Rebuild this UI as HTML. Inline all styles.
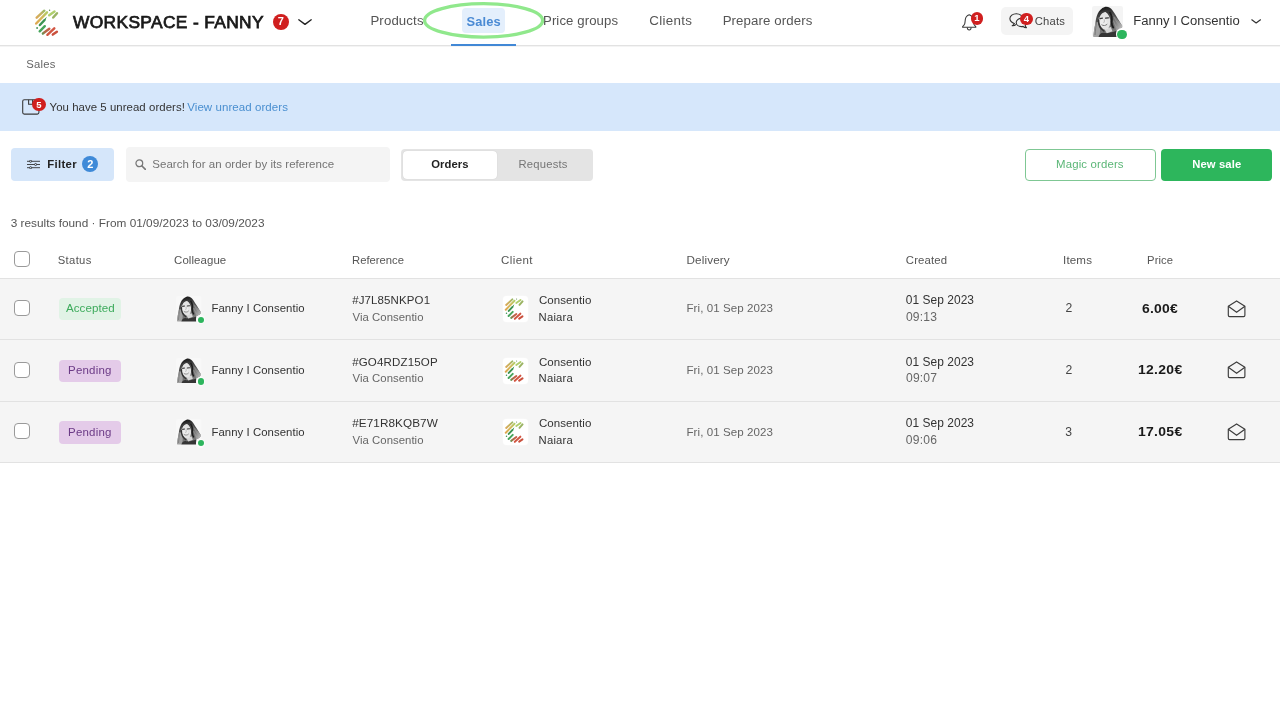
<!DOCTYPE html>
<html><head><meta charset="utf-8"><title>Sales</title>
<style>
html,body{margin:0;padding:0;background:#fff}
body{width:1280px;height:701px;position:relative;overflow:hidden;font-family:"Liberation Sans", sans-serif;}
.t{position:absolute;white-space:nowrap;line-height:20px;height:20px}
.b{position:absolute;box-sizing:border-box}
</style></head><body><div id="root" style="position:absolute;left:0;top:0;width:1280px;height:701px;will-change:transform">
<div class="b" style="left:0;top:44.5px;width:1280px;height:1.5px;background:#e2e2e2"></div>
<div class="b" style="left:0;top:46px;width:1280px;height:0.6px;background:#f4f4f4"></div>
<div class="b" style="left:461.7px;top:7.9px;width:43.6px;height:25px;border-radius:4px;background:#e4effc"></div>
<div class="b" style="left:451.1px;top:44.3px;width:65.1px;height:1.8px;background:#4188d6"></div>
<svg style="position:absolute;left:34px;top:9px" width="26.00" height="28.00" viewBox="0 0 26 28">
<defs>
<linearGradient id="lg34_9a" gradientUnits="userSpaceOnUse" x1="2" y1="10" x2="11" y2="1"><stop offset="0" stop-color="#dba14a"/><stop offset="0.55" stop-color="#c2ae55"/><stop offset="1" stop-color="#8fb45e"/></linearGradient>
<linearGradient id="lg34_9b" gradientUnits="userSpaceOnUse" x1="1.5" y1="15.5" x2="13.7" y2="2.7"><stop offset="0" stop-color="#dd9f42"/><stop offset="0.5" stop-color="#d3b24c"/><stop offset="1" stop-color="#a9cb5e"/></linearGradient>
<linearGradient id="lg34_9c" gradientUnits="userSpaceOnUse" x1="8.2" y1="25.2" x2="16" y2="19.2"><stop offset="0" stop-color="#4f9447"/><stop offset="0.35" stop-color="#a8603a"/><stop offset="1" stop-color="#c9503a"/></linearGradient>
</defs>
<g stroke-width="2.45" stroke-linecap="round" fill="none" opacity="0.93">
<line x1="2.7" y1="8.6" x2="10.3" y2="1.7" stroke="url(#lg34_9a)"/>
<line x1="2.2" y1="14.5" x2="13" y2="3.4" stroke="url(#lg34_9b)"/>
<line x1="15.2" y1="6.2" x2="20.5" y2="2.5" stroke="#a9cb62"/>
<line x1="19.2" y1="8.5" x2="23" y2="4.2" stroke="#93ae58"/>
<line x1="5.9" y1="16" x2="10.6" y2="11" stroke="#2f8c46"/>
<line x1="10.6" y1="11" x2="12.1" y2="8.8" stroke="#2f8c46" stroke-width="1"/>
<line x1="5.7" y1="22.3" x2="10.8" y2="17.2" stroke="#3a9f50"/>
<line x1="8.9" y1="24.6" x2="15.3" y2="19.8" stroke="url(#lg34_9c)"/>
<line x1="13.4" y1="25.8" x2="20.3" y2="19.4" stroke="#cf4a35"/>
<line x1="18.8" y1="25.6" x2="22.9" y2="22.8" stroke="#c6432f"/>
</g>
<circle cx="3.1" cy="19" r="0.9" fill="#3a9050"/><circle cx="15.6" cy="1.3" r="0.7" fill="#5d8a52"/>
</svg>
<div style="position:absolute;left:272.80px;top:14.10px;width:15.80px;height:15.80px;border-radius:50%;background:#d01f1f;color:#fff;font-weight:bold;font-size:11px;line-height:15.80px;text-align:center;">7</div>
<svg style="position:absolute;left:298px;top:19.3px" width="14" height="6.4" viewBox="0 0 14 6.4"><path d="M0.8 0.8 L7.0 5.4 L13.2 0.8" fill="none" stroke="#222" stroke-width="1.4" stroke-linecap="round" stroke-linejoin="round"/></svg>
<svg style="position:absolute;left:961.5px;top:13.5px" width="15" height="17.5" viewBox="0 0 15 17.5"><path d="M7.2 0.8 C5 1.5 3.6 3.2 3.3 5.6 C3.1 7.6 3 8.8 2.7 9.8 C2.3 11 1.4 11.8 0.6 12.6 L0.6 13.2 L13.8 13.2 L13.8 12.6 C13 11.8 12.1 11 11.7 9.8 C11.4 8.8 11.3 7.6 11.1 5.6 C10.8 3.2 9.4 1.5 7.2 0.8 Z" fill="none" stroke="#3a3a3a" stroke-width="1.05" stroke-linejoin="round"/><path d="M5.3 13.5 C5.4 16.7 9 16.7 9.1 13.5" fill="none" stroke="#3a3a3a" stroke-width="1.05"/></svg>
<div style="position:absolute;left:970.50px;top:12.20px;width:12.80px;height:12.80px;border-radius:50%;background:#d01f1f;color:#fff;font-weight:bold;font-size:9.5px;line-height:12.80px;text-align:center;">1</div>
<div class="b" style="left:1001.2px;top:7.4px;width:71.6px;height:27.2px;border-radius:5px;background:#f4f4f4"></div>
<svg style="position:absolute;left:1009px;top:13.2px" width="19" height="16" viewBox="0 0 19 16"><path d="M5.2 10.6 C2.4 9.4 0.9 7.6 0.9 5.6 C0.9 2.9 3.7 0.7 7.3 0.7 C10.9 0.7 13.6 2.9 13.6 5.6" fill="none" stroke="#333" stroke-width="1.1" stroke-linecap="round"/><path d="M5.2 10.6 C4.9 11.6 4.2 12.3 3.2 12.8 C4.8 12.9 6 12.5 6.9 11.6" fill="none" stroke="#333" stroke-width="1.1" stroke-linejoin="round" stroke-linecap="round"/><path d="M12.4 5.4 C9.5 5.4 7.2 7.2 7.2 9.5 C7.2 11.8 9.5 13.6 12.4 13.6 C13 13.6 13.6 13.5 14.1 13.4 C14.9 14.3 16.1 14.8 17.5 14.7 C16.7 14.1 16.3 13.3 16.2 12.4 C17.1 11.6 17.6 10.6 17.6 9.5 C17.6 7.2 15.3 5.4 12.4 5.4 Z" fill="none" stroke="#333" stroke-width="1.1" stroke-linejoin="round"/></svg>
<div style="position:absolute;left:1020.00px;top:12.60px;width:12.80px;height:12.80px;border-radius:50%;background:#d01f1f;color:#fff;font-weight:bold;font-size:9.5px;line-height:12.80px;text-align:center;">4</div>
<svg style="position:absolute;left:1091.8px;top:5.8px" width="31" height="31" viewBox="0 0 31 31">
<defs><clipPath id="av1091_5"><rect width="31" height="31" rx="2.2"/></clipPath>
<filter id="av1091_5b" x="-10%" y="-10%" width="120%" height="120%"><feGaussianBlur stdDeviation="0.55"/></filter>
<filter id="av1091_5c" x="-10%" y="-10%" width="120%" height="120%"><feGaussianBlur stdDeviation="0.45"/></filter>
<linearGradient id="av1091_5h" x1="0.35" y1="0" x2="0.6" y2="1"><stop offset="0" stop-color="#181818"/><stop offset="0.3" stop-color="#484848"/><stop offset="0.7" stop-color="#6e6e6e"/><stop offset="1" stop-color="#8a8a8a"/></linearGradient>
<linearGradient id="av1091_5r" x1="0" y1="0" x2="1" y2="0.8"><stop offset="0" stop-color="#505050"/><stop offset="0.55" stop-color="#828282"/><stop offset="1" stop-color="#bdbdbd"/></linearGradient>
</defs>
<g clip-path="url(#av1091_5)"><rect width="31" height="31" fill="#f4f4f4"/>
<g filter="url(#av1091_5b)">
<path d="M12.7 0.9 C16 0.2 18.8 1.8 20.8 4.8 C23 8 25.5 12 30.2 19.8 C30.6 21.6 28 23.4 24.6 24.6 L24.4 31.5 L1.4 31.5 C1.6 26.5 2.4 21.5 3.4 17.4 C3.8 11.5 6 3 12.7 0.9 Z" fill="url(#av1091_5h)"/>
<path d="M19.4 6.5 C22 9.5 25.6 13.2 30.2 19.8 C30.6 21.6 28 23.4 24.6 24.6 C22.6 21 20.6 15 19.4 6.5 Z" fill="url(#av1091_5r)"/>
<path d="M1.4 31.5 C1.6 26.5 2.4 21.5 3.4 17.4 C4.6 15.4 5.8 15.6 6.4 17.6 L8.2 24 L7.2 31.5 Z" fill="#a2a2a2"/>
<path d="M6.4 31.5 C7.2 27.6 9.4 26.2 12.6 26.8 C16 27.6 20 26.4 24.5 24.8 L24.4 31.5 Z" fill="#363636"/>
<path d="M12.4 23 L18.8 21 L20.4 25.2 L14.8 27.2 Z" fill="#d6d6d6"/>
<ellipse cx="12.5" cy="14.6" rx="5.7" ry="9.1" transform="rotate(-10 12.5 14.6)" fill="#e4e4e4"/>
<ellipse cx="11.4" cy="16.6" rx="3.4" ry="4.2" fill="#ececec"/>
</g>
<g filter="url(#av1091_5c)">
<path d="M6.8 9.6 C7.8 4.4 14.8 2.4 18.6 7.4 C16.6 6 14 5.6 11.8 6.4 C9.6 7.2 7.8 9.4 7 13 C6.6 11.8 6.6 10.6 6.8 9.6 Z" fill="#3a3a3a"/>
<path d="M18 6.4 C19.8 9 20.2 12.6 19.6 16.4 C19.8 18.6 20.4 20.4 21.2 21.6" stroke="#1c1c1c" stroke-width="1.8" fill="none" stroke-linecap="round"/>
<path d="M6.6 14 C6.4 18 8 22.4 11.8 25" stroke="#333" stroke-width="1.5" fill="none" stroke-linecap="round"/>
<path d="M8 12.6 L10.4 12.2 M13.6 12.2 L16.4 11.8" stroke="#3a3a3a" stroke-width="1.3" fill="none" stroke-linecap="round"/>
<path d="M12.2 13.4 C12.6 15 12.4 16 11.6 16.8" stroke="#a8a8a8" stroke-width="0.9" fill="none"/>
<path d="M9.8 18.9 C11.2 20 13.6 19.8 15 18.4" stroke="#787878" stroke-width="1" fill="none" stroke-linecap="round"/>
<path d="M22 11 C24 15 26 18 28.6 20.6 M21.4 14.6 C22.6 18 24 20.6 26 22.6" stroke="#a6a6a6" stroke-width="0.7" fill="none" opacity="0.8"/>
<path d="M4.6 16 C4 20 3.4 24 3 29" stroke="#6a6a6a" stroke-width="0.9" fill="none" opacity="0.8"/>
</g></g></svg>
<div style="position:absolute;left:1116.00px;top:28.40px;width:12.00px;height:12.00px;border-radius:50%;background:#fff"></div>
<div style="position:absolute;left:1117.40px;top:29.80px;width:9.20px;height:9.20px;border-radius:50%;background:#2db55d"></div>
<svg style="position:absolute;left:1250.6px;top:19.3px" width="10.3" height="5.0" viewBox="0 0 10.3 5.0"><path d="M0.8 0.8 L5.15 4.0 L9.5 0.8" fill="none" stroke="#333" stroke-width="1.2" stroke-linecap="round" stroke-linejoin="round"/></svg>
<div class="b" style="left:0;top:83px;width:1280px;height:47.5px;background:#d6e7fb"></div>
<svg style="position:absolute;left:21.6px;top:99px" width="18" height="16" viewBox="0 0 18 16"><rect x="0.7" y="0.7" width="16.2" height="14.4" rx="1.6" fill="none" stroke="#3a3a3a" stroke-width="1.1"/><path d="M6.6 0.7 L6.6 5.3 L10.6 5.3 L10.6 0.7" fill="none" stroke="#3a3a3a" stroke-width="1.1"/></svg>
<div style="position:absolute;left:32.40px;top:98.20px;width:13.20px;height:13.20px;border-radius:50%;background:#d01f1f;color:#fff;font-weight:bold;font-size:9.5px;line-height:13.20px;text-align:center;">5</div>
<div class="b" style="left:11px;top:148px;width:103.4px;height:32.8px;border-radius:4px;background:#d5e6fa"></div>
<svg style="position:absolute;left:26.9px;top:159.9px" width="13" height="9" viewBox="0 0 13 9"><g stroke="#333" stroke-width="0.9" fill="none"><path d="M0 1.3 H13 M0 4.5 H13 M0 7.7 H13"/></g><g fill="#d5e6fa" stroke="#333" stroke-width="0.9"><circle cx="3.6" cy="1.3" r="1.05"/><circle cx="8.6" cy="4.5" r="1.05"/><circle cx="3.6" cy="7.7" r="1.05"/></g></svg>
<div style="position:absolute;left:82.30px;top:156.40px;width:16.00px;height:16.00px;border-radius:50%;background:#3f8ad8;color:#fff;font-weight:bold;font-size:11px;line-height:16.00px;text-align:center;">2</div>
<div class="b" style="left:125.5px;top:147px;width:264px;height:35px;border-radius:4px;background:#f4f4f4"></div>
<svg style="position:absolute;left:134.8px;top:159.0px" width="11.3" height="11.3" viewBox="0 0 12 12"><circle cx="4.6" cy="4.6" r="3.6" fill="none" stroke="#777" stroke-width="1.3"/><path d="M7.4 7.4 L11 11" stroke="#777" stroke-width="1.7" stroke-linecap="round"/></svg>
<div class="b" style="left:400.5px;top:148.7px;width:192px;height:32.2px;border-radius:4px;background:#e4e4e4"></div>
<div class="b" style="left:403.2px;top:151px;width:93.4px;height:27.6px;border-radius:4px;background:#fff;box-shadow:0 0 1px rgba(0,0,0,.18)"></div>
<div class="b" style="left:1025px;top:149.2px;width:131px;height:31.6px;border-radius:4px;background:#fff;border:1px solid #7fc794"></div>
<div class="b" style="left:1161.2px;top:149.2px;width:110.8px;height:31.6px;border-radius:4px;background:#2db65c"></div>
<div class="b" style="left:0;top:278px;width:1280px;height:184px;background:#f5f5f5"></div>
<div class="b" style="left:0;top:278px;width:1280px;height:1px;background:#e2e2e2"></div>
<div class="b" style="left:0;top:339px;width:1280px;height:1px;background:#e2e2e2"></div>
<div class="b" style="left:0;top:400.8px;width:1280px;height:1px;background:#e2e2e2"></div>
<div class="b" style="left:0;top:461.6px;width:1280px;height:1px;background:#e2e2e2"></div>
<div style="position:absolute;left:14.1px;top:251.0px;width:16px;height:16px;box-sizing:border-box;border:1px solid #9a9a9a;border-radius:4px;background:#fff"></div>
<div style="position:absolute;left:14.1px;top:300.0px;width:16px;height:16px;box-sizing:border-box;border:1px solid #9a9a9a;border-radius:4px;background:#fff"></div>
<div class="b" style="left:59px;top:298.20000000000005px;width:62.2px;height:22.2px;border-radius:4px;background:#e1f3e6"></div>
<svg style="position:absolute;left:176.1px;top:296.1px" width="25.6" height="25.6" viewBox="0 0 31 31">
<defs><clipPath id="av176_296"><rect width="31" height="31" rx="2.2"/></clipPath>
<filter id="av176_296b" x="-10%" y="-10%" width="120%" height="120%"><feGaussianBlur stdDeviation="0.55"/></filter>
<filter id="av176_296c" x="-10%" y="-10%" width="120%" height="120%"><feGaussianBlur stdDeviation="0.45"/></filter>
<linearGradient id="av176_296h" x1="0.35" y1="0" x2="0.6" y2="1"><stop offset="0" stop-color="#181818"/><stop offset="0.3" stop-color="#484848"/><stop offset="0.7" stop-color="#6e6e6e"/><stop offset="1" stop-color="#8a8a8a"/></linearGradient>
<linearGradient id="av176_296r" x1="0" y1="0" x2="1" y2="0.8"><stop offset="0" stop-color="#505050"/><stop offset="0.55" stop-color="#828282"/><stop offset="1" stop-color="#bdbdbd"/></linearGradient>
</defs>
<g clip-path="url(#av176_296)"><rect width="31" height="31" fill="#f8f8f8"/>
<g filter="url(#av176_296b)">
<path d="M12.7 0.9 C16 0.2 18.8 1.8 20.8 4.8 C23 8 25.5 12 30.2 19.8 C30.6 21.6 28 23.4 24.6 24.6 L24.4 31.5 L1.4 31.5 C1.6 26.5 2.4 21.5 3.4 17.4 C3.8 11.5 6 3 12.7 0.9 Z" fill="url(#av176_296h)"/>
<path d="M19.4 6.5 C22 9.5 25.6 13.2 30.2 19.8 C30.6 21.6 28 23.4 24.6 24.6 C22.6 21 20.6 15 19.4 6.5 Z" fill="url(#av176_296r)"/>
<path d="M1.4 31.5 C1.6 26.5 2.4 21.5 3.4 17.4 C4.6 15.4 5.8 15.6 6.4 17.6 L8.2 24 L7.2 31.5 Z" fill="#a2a2a2"/>
<path d="M6.4 31.5 C7.2 27.6 9.4 26.2 12.6 26.8 C16 27.6 20 26.4 24.5 24.8 L24.4 31.5 Z" fill="#363636"/>
<path d="M12.4 23 L18.8 21 L20.4 25.2 L14.8 27.2 Z" fill="#d6d6d6"/>
<ellipse cx="12.5" cy="14.6" rx="5.7" ry="9.1" transform="rotate(-10 12.5 14.6)" fill="#e4e4e4"/>
<ellipse cx="11.4" cy="16.6" rx="3.4" ry="4.2" fill="#ececec"/>
</g>
<g filter="url(#av176_296c)">
<path d="M6.8 9.6 C7.8 4.4 14.8 2.4 18.6 7.4 C16.6 6 14 5.6 11.8 6.4 C9.6 7.2 7.8 9.4 7 13 C6.6 11.8 6.6 10.6 6.8 9.6 Z" fill="#3a3a3a"/>
<path d="M18 6.4 C19.8 9 20.2 12.6 19.6 16.4 C19.8 18.6 20.4 20.4 21.2 21.6" stroke="#1c1c1c" stroke-width="1.8" fill="none" stroke-linecap="round"/>
<path d="M6.6 14 C6.4 18 8 22.4 11.8 25" stroke="#333" stroke-width="1.5" fill="none" stroke-linecap="round"/>
<path d="M8 12.6 L10.4 12.2 M13.6 12.2 L16.4 11.8" stroke="#3a3a3a" stroke-width="1.3" fill="none" stroke-linecap="round"/>
<path d="M12.2 13.4 C12.6 15 12.4 16 11.6 16.8" stroke="#a8a8a8" stroke-width="0.9" fill="none"/>
<path d="M9.8 18.9 C11.2 20 13.6 19.8 15 18.4" stroke="#787878" stroke-width="1" fill="none" stroke-linecap="round"/>
<path d="M22 11 C24 15 26 18 28.6 20.6 M21.4 14.6 C22.6 18 24 20.6 26 22.6" stroke="#a6a6a6" stroke-width="0.7" fill="none" opacity="0.8"/>
<path d="M4.6 16 C4 20 3.4 24 3 29" stroke="#6a6a6a" stroke-width="0.9" fill="none" opacity="0.8"/>
</g></g></svg>
<div style="position:absolute;left:196.20px;top:315.30px;width:9.20px;height:9.20px;border-radius:50%;background:#fbfbfb"></div>
<div style="position:absolute;left:197.50px;top:316.60px;width:6.60px;height:6.60px;border-radius:50%;background:#2db55d"></div>
<div class="b" style="left:503.2px;top:296.1px;width:25.2px;height:26.2px;border-radius:4px;background:#fff;box-shadow:0 0 1.5px #fff"></div>
<svg style="position:absolute;left:504.0px;top:297.90000000000003px" width="20.99" height="22.61" viewBox="0 0 26 28">
<defs>
<linearGradient id="lg504_297a" gradientUnits="userSpaceOnUse" x1="2" y1="10" x2="11" y2="1"><stop offset="0" stop-color="#dba14a"/><stop offset="0.55" stop-color="#c2ae55"/><stop offset="1" stop-color="#8fb45e"/></linearGradient>
<linearGradient id="lg504_297b" gradientUnits="userSpaceOnUse" x1="1.5" y1="15.5" x2="13.7" y2="2.7"><stop offset="0" stop-color="#dd9f42"/><stop offset="0.5" stop-color="#d3b24c"/><stop offset="1" stop-color="#a9cb5e"/></linearGradient>
<linearGradient id="lg504_297c" gradientUnits="userSpaceOnUse" x1="8.2" y1="25.2" x2="16" y2="19.2"><stop offset="0" stop-color="#4f9447"/><stop offset="0.35" stop-color="#a8603a"/><stop offset="1" stop-color="#c9503a"/></linearGradient>
</defs>
<g stroke-width="2.45" stroke-linecap="round" fill="none" opacity="0.93">
<line x1="2.7" y1="8.6" x2="10.3" y2="1.7" stroke="url(#lg504_297a)"/>
<line x1="2.2" y1="14.5" x2="13" y2="3.4" stroke="url(#lg504_297b)"/>
<line x1="15.2" y1="6.2" x2="20.5" y2="2.5" stroke="#a9cb62"/>
<line x1="19.2" y1="8.5" x2="23" y2="4.2" stroke="#93ae58"/>
<line x1="5.9" y1="16" x2="10.6" y2="11" stroke="#2f8c46"/>
<line x1="10.6" y1="11" x2="12.1" y2="8.8" stroke="#2f8c46" stroke-width="1"/>
<line x1="5.7" y1="22.3" x2="10.8" y2="17.2" stroke="#3a9f50"/>
<line x1="8.9" y1="24.6" x2="15.3" y2="19.8" stroke="url(#lg504_297c)"/>
<line x1="13.4" y1="25.8" x2="20.3" y2="19.4" stroke="#cf4a35"/>
<line x1="18.8" y1="25.6" x2="22.9" y2="22.8" stroke="#c6432f"/>
</g>
<circle cx="3.1" cy="19" r="0.9" fill="#3a9050"/><circle cx="15.6" cy="1.3" r="0.7" fill="#5d8a52"/>
</svg>
<svg style="position:absolute;left:1226.6px;top:299.5px" width="19" height="18" viewBox="0 0 19 18"><path d="M1.3 6.3 L9.6 0.9 L17.9 6.3 L17.9 15.3 Q17.9 16.6 16.6 16.6 L2.6 16.6 Q1.3 16.6 1.3 15.3 Z" fill="none" stroke="#3c3c3c" stroke-width="1.15" stroke-linejoin="round"/><path d="M1.3 6.3 L9.6 12.3 L17.9 6.3" fill="none" stroke="#3c3c3c" stroke-width="1.15" stroke-linejoin="round"/></svg>
<div style="position:absolute;left:14.1px;top:361.59999999999997px;width:16px;height:16px;box-sizing:border-box;border:1px solid #9a9a9a;border-radius:4px;background:#fff"></div>
<div class="b" style="left:59px;top:359.8px;width:62.2px;height:22.2px;border-radius:4px;background:#e4cbe9"></div>
<svg style="position:absolute;left:176.1px;top:357.7px" width="25.6" height="25.6" viewBox="0 0 31 31">
<defs><clipPath id="av176_357"><rect width="31" height="31" rx="2.2"/></clipPath>
<filter id="av176_357b" x="-10%" y="-10%" width="120%" height="120%"><feGaussianBlur stdDeviation="0.55"/></filter>
<filter id="av176_357c" x="-10%" y="-10%" width="120%" height="120%"><feGaussianBlur stdDeviation="0.45"/></filter>
<linearGradient id="av176_357h" x1="0.35" y1="0" x2="0.6" y2="1"><stop offset="0" stop-color="#181818"/><stop offset="0.3" stop-color="#484848"/><stop offset="0.7" stop-color="#6e6e6e"/><stop offset="1" stop-color="#8a8a8a"/></linearGradient>
<linearGradient id="av176_357r" x1="0" y1="0" x2="1" y2="0.8"><stop offset="0" stop-color="#505050"/><stop offset="0.55" stop-color="#828282"/><stop offset="1" stop-color="#bdbdbd"/></linearGradient>
</defs>
<g clip-path="url(#av176_357)"><rect width="31" height="31" fill="#f8f8f8"/>
<g filter="url(#av176_357b)">
<path d="M12.7 0.9 C16 0.2 18.8 1.8 20.8 4.8 C23 8 25.5 12 30.2 19.8 C30.6 21.6 28 23.4 24.6 24.6 L24.4 31.5 L1.4 31.5 C1.6 26.5 2.4 21.5 3.4 17.4 C3.8 11.5 6 3 12.7 0.9 Z" fill="url(#av176_357h)"/>
<path d="M19.4 6.5 C22 9.5 25.6 13.2 30.2 19.8 C30.6 21.6 28 23.4 24.6 24.6 C22.6 21 20.6 15 19.4 6.5 Z" fill="url(#av176_357r)"/>
<path d="M1.4 31.5 C1.6 26.5 2.4 21.5 3.4 17.4 C4.6 15.4 5.8 15.6 6.4 17.6 L8.2 24 L7.2 31.5 Z" fill="#a2a2a2"/>
<path d="M6.4 31.5 C7.2 27.6 9.4 26.2 12.6 26.8 C16 27.6 20 26.4 24.5 24.8 L24.4 31.5 Z" fill="#363636"/>
<path d="M12.4 23 L18.8 21 L20.4 25.2 L14.8 27.2 Z" fill="#d6d6d6"/>
<ellipse cx="12.5" cy="14.6" rx="5.7" ry="9.1" transform="rotate(-10 12.5 14.6)" fill="#e4e4e4"/>
<ellipse cx="11.4" cy="16.6" rx="3.4" ry="4.2" fill="#ececec"/>
</g>
<g filter="url(#av176_357c)">
<path d="M6.8 9.6 C7.8 4.4 14.8 2.4 18.6 7.4 C16.6 6 14 5.6 11.8 6.4 C9.6 7.2 7.8 9.4 7 13 C6.6 11.8 6.6 10.6 6.8 9.6 Z" fill="#3a3a3a"/>
<path d="M18 6.4 C19.8 9 20.2 12.6 19.6 16.4 C19.8 18.6 20.4 20.4 21.2 21.6" stroke="#1c1c1c" stroke-width="1.8" fill="none" stroke-linecap="round"/>
<path d="M6.6 14 C6.4 18 8 22.4 11.8 25" stroke="#333" stroke-width="1.5" fill="none" stroke-linecap="round"/>
<path d="M8 12.6 L10.4 12.2 M13.6 12.2 L16.4 11.8" stroke="#3a3a3a" stroke-width="1.3" fill="none" stroke-linecap="round"/>
<path d="M12.2 13.4 C12.6 15 12.4 16 11.6 16.8" stroke="#a8a8a8" stroke-width="0.9" fill="none"/>
<path d="M9.8 18.9 C11.2 20 13.6 19.8 15 18.4" stroke="#787878" stroke-width="1" fill="none" stroke-linecap="round"/>
<path d="M22 11 C24 15 26 18 28.6 20.6 M21.4 14.6 C22.6 18 24 20.6 26 22.6" stroke="#a6a6a6" stroke-width="0.7" fill="none" opacity="0.8"/>
<path d="M4.6 16 C4 20 3.4 24 3 29" stroke="#6a6a6a" stroke-width="0.9" fill="none" opacity="0.8"/>
</g></g></svg>
<div style="position:absolute;left:196.20px;top:376.90px;width:9.20px;height:9.20px;border-radius:50%;background:#fbfbfb"></div>
<div style="position:absolute;left:197.50px;top:378.20px;width:6.60px;height:6.60px;border-radius:50%;background:#2db55d"></div>
<div class="b" style="left:503.2px;top:357.7px;width:25.2px;height:26.2px;border-radius:4px;background:#fff;box-shadow:0 0 1.5px #fff"></div>
<svg style="position:absolute;left:504.0px;top:359.5px" width="20.99" height="22.61" viewBox="0 0 26 28">
<defs>
<linearGradient id="lg504_359a" gradientUnits="userSpaceOnUse" x1="2" y1="10" x2="11" y2="1"><stop offset="0" stop-color="#dba14a"/><stop offset="0.55" stop-color="#c2ae55"/><stop offset="1" stop-color="#8fb45e"/></linearGradient>
<linearGradient id="lg504_359b" gradientUnits="userSpaceOnUse" x1="1.5" y1="15.5" x2="13.7" y2="2.7"><stop offset="0" stop-color="#dd9f42"/><stop offset="0.5" stop-color="#d3b24c"/><stop offset="1" stop-color="#a9cb5e"/></linearGradient>
<linearGradient id="lg504_359c" gradientUnits="userSpaceOnUse" x1="8.2" y1="25.2" x2="16" y2="19.2"><stop offset="0" stop-color="#4f9447"/><stop offset="0.35" stop-color="#a8603a"/><stop offset="1" stop-color="#c9503a"/></linearGradient>
</defs>
<g stroke-width="2.45" stroke-linecap="round" fill="none" opacity="0.93">
<line x1="2.7" y1="8.6" x2="10.3" y2="1.7" stroke="url(#lg504_359a)"/>
<line x1="2.2" y1="14.5" x2="13" y2="3.4" stroke="url(#lg504_359b)"/>
<line x1="15.2" y1="6.2" x2="20.5" y2="2.5" stroke="#a9cb62"/>
<line x1="19.2" y1="8.5" x2="23" y2="4.2" stroke="#93ae58"/>
<line x1="5.9" y1="16" x2="10.6" y2="11" stroke="#2f8c46"/>
<line x1="10.6" y1="11" x2="12.1" y2="8.8" stroke="#2f8c46" stroke-width="1"/>
<line x1="5.7" y1="22.3" x2="10.8" y2="17.2" stroke="#3a9f50"/>
<line x1="8.9" y1="24.6" x2="15.3" y2="19.8" stroke="url(#lg504_359c)"/>
<line x1="13.4" y1="25.8" x2="20.3" y2="19.4" stroke="#cf4a35"/>
<line x1="18.8" y1="25.6" x2="22.9" y2="22.8" stroke="#c6432f"/>
</g>
<circle cx="3.1" cy="19" r="0.9" fill="#3a9050"/><circle cx="15.6" cy="1.3" r="0.7" fill="#5d8a52"/>
</svg>
<svg style="position:absolute;left:1226.6px;top:361.09999999999997px" width="19" height="18" viewBox="0 0 19 18"><path d="M1.3 6.3 L9.6 0.9 L17.9 6.3 L17.9 15.3 Q17.9 16.6 16.6 16.6 L2.6 16.6 Q1.3 16.6 1.3 15.3 Z" fill="none" stroke="#3c3c3c" stroke-width="1.15" stroke-linejoin="round"/><path d="M1.3 6.3 L9.6 12.3 L17.9 6.3" fill="none" stroke="#3c3c3c" stroke-width="1.15" stroke-linejoin="round"/></svg>
<div style="position:absolute;left:14.1px;top:423.2px;width:16px;height:16px;box-sizing:border-box;border:1px solid #9a9a9a;border-radius:4px;background:#fff"></div>
<div class="b" style="left:59px;top:421.40000000000003px;width:62.2px;height:22.2px;border-radius:4px;background:#e4cbe9"></div>
<svg style="position:absolute;left:176.1px;top:419.3px" width="25.6" height="25.6" viewBox="0 0 31 31">
<defs><clipPath id="av176_419"><rect width="31" height="31" rx="2.2"/></clipPath>
<filter id="av176_419b" x="-10%" y="-10%" width="120%" height="120%"><feGaussianBlur stdDeviation="0.55"/></filter>
<filter id="av176_419c" x="-10%" y="-10%" width="120%" height="120%"><feGaussianBlur stdDeviation="0.45"/></filter>
<linearGradient id="av176_419h" x1="0.35" y1="0" x2="0.6" y2="1"><stop offset="0" stop-color="#181818"/><stop offset="0.3" stop-color="#484848"/><stop offset="0.7" stop-color="#6e6e6e"/><stop offset="1" stop-color="#8a8a8a"/></linearGradient>
<linearGradient id="av176_419r" x1="0" y1="0" x2="1" y2="0.8"><stop offset="0" stop-color="#505050"/><stop offset="0.55" stop-color="#828282"/><stop offset="1" stop-color="#bdbdbd"/></linearGradient>
</defs>
<g clip-path="url(#av176_419)"><rect width="31" height="31" fill="#f8f8f8"/>
<g filter="url(#av176_419b)">
<path d="M12.7 0.9 C16 0.2 18.8 1.8 20.8 4.8 C23 8 25.5 12 30.2 19.8 C30.6 21.6 28 23.4 24.6 24.6 L24.4 31.5 L1.4 31.5 C1.6 26.5 2.4 21.5 3.4 17.4 C3.8 11.5 6 3 12.7 0.9 Z" fill="url(#av176_419h)"/>
<path d="M19.4 6.5 C22 9.5 25.6 13.2 30.2 19.8 C30.6 21.6 28 23.4 24.6 24.6 C22.6 21 20.6 15 19.4 6.5 Z" fill="url(#av176_419r)"/>
<path d="M1.4 31.5 C1.6 26.5 2.4 21.5 3.4 17.4 C4.6 15.4 5.8 15.6 6.4 17.6 L8.2 24 L7.2 31.5 Z" fill="#a2a2a2"/>
<path d="M6.4 31.5 C7.2 27.6 9.4 26.2 12.6 26.8 C16 27.6 20 26.4 24.5 24.8 L24.4 31.5 Z" fill="#363636"/>
<path d="M12.4 23 L18.8 21 L20.4 25.2 L14.8 27.2 Z" fill="#d6d6d6"/>
<ellipse cx="12.5" cy="14.6" rx="5.7" ry="9.1" transform="rotate(-10 12.5 14.6)" fill="#e4e4e4"/>
<ellipse cx="11.4" cy="16.6" rx="3.4" ry="4.2" fill="#ececec"/>
</g>
<g filter="url(#av176_419c)">
<path d="M6.8 9.6 C7.8 4.4 14.8 2.4 18.6 7.4 C16.6 6 14 5.6 11.8 6.4 C9.6 7.2 7.8 9.4 7 13 C6.6 11.8 6.6 10.6 6.8 9.6 Z" fill="#3a3a3a"/>
<path d="M18 6.4 C19.8 9 20.2 12.6 19.6 16.4 C19.8 18.6 20.4 20.4 21.2 21.6" stroke="#1c1c1c" stroke-width="1.8" fill="none" stroke-linecap="round"/>
<path d="M6.6 14 C6.4 18 8 22.4 11.8 25" stroke="#333" stroke-width="1.5" fill="none" stroke-linecap="round"/>
<path d="M8 12.6 L10.4 12.2 M13.6 12.2 L16.4 11.8" stroke="#3a3a3a" stroke-width="1.3" fill="none" stroke-linecap="round"/>
<path d="M12.2 13.4 C12.6 15 12.4 16 11.6 16.8" stroke="#a8a8a8" stroke-width="0.9" fill="none"/>
<path d="M9.8 18.9 C11.2 20 13.6 19.8 15 18.4" stroke="#787878" stroke-width="1" fill="none" stroke-linecap="round"/>
<path d="M22 11 C24 15 26 18 28.6 20.6 M21.4 14.6 C22.6 18 24 20.6 26 22.6" stroke="#a6a6a6" stroke-width="0.7" fill="none" opacity="0.8"/>
<path d="M4.6 16 C4 20 3.4 24 3 29" stroke="#6a6a6a" stroke-width="0.9" fill="none" opacity="0.8"/>
</g></g></svg>
<div style="position:absolute;left:196.20px;top:438.50px;width:9.20px;height:9.20px;border-radius:50%;background:#fbfbfb"></div>
<div style="position:absolute;left:197.50px;top:439.80px;width:6.60px;height:6.60px;border-radius:50%;background:#2db55d"></div>
<div class="b" style="left:503.2px;top:419.3px;width:25.2px;height:26.2px;border-radius:4px;background:#fff;box-shadow:0 0 1.5px #fff"></div>
<svg style="position:absolute;left:504.0px;top:421.1px" width="20.99" height="22.61" viewBox="0 0 26 28">
<defs>
<linearGradient id="lg504_421a" gradientUnits="userSpaceOnUse" x1="2" y1="10" x2="11" y2="1"><stop offset="0" stop-color="#dba14a"/><stop offset="0.55" stop-color="#c2ae55"/><stop offset="1" stop-color="#8fb45e"/></linearGradient>
<linearGradient id="lg504_421b" gradientUnits="userSpaceOnUse" x1="1.5" y1="15.5" x2="13.7" y2="2.7"><stop offset="0" stop-color="#dd9f42"/><stop offset="0.5" stop-color="#d3b24c"/><stop offset="1" stop-color="#a9cb5e"/></linearGradient>
<linearGradient id="lg504_421c" gradientUnits="userSpaceOnUse" x1="8.2" y1="25.2" x2="16" y2="19.2"><stop offset="0" stop-color="#4f9447"/><stop offset="0.35" stop-color="#a8603a"/><stop offset="1" stop-color="#c9503a"/></linearGradient>
</defs>
<g stroke-width="2.45" stroke-linecap="round" fill="none" opacity="0.93">
<line x1="2.7" y1="8.6" x2="10.3" y2="1.7" stroke="url(#lg504_421a)"/>
<line x1="2.2" y1="14.5" x2="13" y2="3.4" stroke="url(#lg504_421b)"/>
<line x1="15.2" y1="6.2" x2="20.5" y2="2.5" stroke="#a9cb62"/>
<line x1="19.2" y1="8.5" x2="23" y2="4.2" stroke="#93ae58"/>
<line x1="5.9" y1="16" x2="10.6" y2="11" stroke="#2f8c46"/>
<line x1="10.6" y1="11" x2="12.1" y2="8.8" stroke="#2f8c46" stroke-width="1"/>
<line x1="5.7" y1="22.3" x2="10.8" y2="17.2" stroke="#3a9f50"/>
<line x1="8.9" y1="24.6" x2="15.3" y2="19.8" stroke="url(#lg504_421c)"/>
<line x1="13.4" y1="25.8" x2="20.3" y2="19.4" stroke="#cf4a35"/>
<line x1="18.8" y1="25.6" x2="22.9" y2="22.8" stroke="#c6432f"/>
</g>
<circle cx="3.1" cy="19" r="0.9" fill="#3a9050"/><circle cx="15.6" cy="1.3" r="0.7" fill="#5d8a52"/>
</svg>
<svg style="position:absolute;left:1226.6px;top:422.7px" width="19" height="18" viewBox="0 0 19 18"><path d="M1.3 6.3 L9.6 0.9 L17.9 6.3 L17.9 15.3 Q17.9 16.6 16.6 16.6 L2.6 16.6 Q1.3 16.6 1.3 15.3 Z" fill="none" stroke="#3c3c3c" stroke-width="1.15" stroke-linejoin="round"/><path d="M1.3 6.3 L9.6 12.3 L17.9 6.3" fill="none" stroke="#3c3c3c" stroke-width="1.15" stroke-linejoin="round"/></svg>
<div class="t" id="t0" style="left:73.00px;top:12.20px;font-size:17.37px;letter-spacing:0.352px;color:#1a1a1a;font-weight:normal;-webkit-text-stroke:0.75px #1a1a1a">WORKSPACE - FANNY</div>
<div class="t" id="t1" style="left:370.40px;top:11.00px;font-size:13.22px;letter-spacing:0.139px;color:#555;font-weight:normal;">Products</div>
<div class="t" id="t2" style="left:466.45px;top:12.00px;font-size:12.90px;letter-spacing:0.114px;color:#4a8ad4;font-weight:bold;">Sales</div>
<div class="t" id="t3" style="left:543.01px;top:11.00px;font-size:13.16px;letter-spacing:0.102px;color:#555;font-weight:normal;">Price groups</div>
<div class="t" id="t4" style="left:649.20px;top:11.00px;font-size:13.37px;letter-spacing:0.315px;color:#555;font-weight:normal;">Clients</div>
<div class="t" id="t5" style="left:722.65px;top:11.00px;font-size:13.25px;letter-spacing:0.105px;color:#555;font-weight:normal;">Prepare orders</div>
<div class="t" id="t6" style="left:1034.65px;top:11.20px;font-size:11.25px;letter-spacing:0.202px;color:#444;font-weight:normal;">Chats</div>
<div class="t" id="t7" style="left:1133.14px;top:10.80px;font-size:13.09px;letter-spacing:0.025px;color:#333;font-weight:normal;">Fanny I Consentio</div>
<div class="t" id="t8" style="left:26.15px;top:54.30px;font-size:11.25px;letter-spacing:0.281px;color:#666;font-weight:normal;">Sales</div>
<div class="t" id="t9" style="left:49.52px;top:97.00px;font-size:11.41px;letter-spacing:0.053px;color:#333;font-weight:normal;">You have 5 unread orders!</div>
<div class="t" id="t10" style="left:187.27px;top:97.00px;font-size:11.50px;letter-spacing:0.065px;color:#4a8fd0;font-weight:normal;">View unread orders</div>
<div class="t" id="t11" style="left:47.36px;top:154.30px;font-size:11.35px;letter-spacing:0.299px;color:#222;font-weight:bold;">Filter</div>
<div class="t" id="t12" style="left:152.31px;top:154.30px;font-size:11.51px;letter-spacing:0.025px;color:#747474;font-weight:normal;">Search for an order by its reference</div>
<div class="t" id="t13" style="left:431.18px;top:154.30px;font-size:11.25px;letter-spacing:0.076px;color:#222;font-weight:bold;">Orders</div>
<div class="t" id="t14" style="left:518.53px;top:154.30px;font-size:11.25px;letter-spacing:0.200px;color:#767676;font-weight:normal;">Requests</div>
<div class="t" id="t15" style="left:1056.08px;top:153.50px;font-size:11.41px;letter-spacing:0.143px;color:#5ab676;font-weight:normal;">Magic orders</div>
<div class="t" id="t16" style="left:1192.20px;top:153.50px;font-size:11.25px;letter-spacing:0.115px;color:#fff;font-weight:bold;">New sale</div>
<div class="t" id="t17" style="left:10.63px;top:212.60px;font-size:11.80px;letter-spacing:0.016px;color:#555;font-weight:normal;">3 results found · From 01/09/2023 to 03/09/2023</div>
<div class="t" id="t18" style="left:57.81px;top:250.20px;font-size:11.25px;letter-spacing:0.318px;color:#555;font-weight:normal;">Status</div>
<div class="t" id="t19" style="left:174.09px;top:250.20px;font-size:11.45px;letter-spacing:0.079px;color:#555;font-weight:normal;">Colleague</div>
<div class="t" id="t20" style="left:352.07px;top:250.20px;font-size:11.25px;letter-spacing:0.005px;color:#555;font-weight:normal;">Reference</div>
<div class="t" id="t21" style="left:501.00px;top:250.20px;font-size:11.52px;letter-spacing:0.411px;color:#555;font-weight:normal;">Client</div>
<div class="t" id="t22" style="left:686.42px;top:250.20px;font-size:11.69px;letter-spacing:0.154px;color:#555;font-weight:normal;">Delivery</div>
<div class="t" id="t23" style="left:905.82px;top:250.20px;font-size:11.37px;letter-spacing:0.148px;color:#555;font-weight:normal;">Created</div>
<div class="t" id="t24" style="left:1063.06px;top:250.20px;font-size:11.58px;letter-spacing:0.150px;color:#555;font-weight:normal;">Items</div>
<div class="t" id="t25" style="left:1147.10px;top:250.20px;font-size:11.25px;letter-spacing:0.067px;color:#555;font-weight:normal;">Price</div>
<div class="t" id="t26" style="left:66.01px;top:298.03px;font-size:11.60px;letter-spacing:0.040px;color:#3dab5c;font-weight:normal;">Accepted</div>
<div class="t" id="t27" style="left:211.51px;top:298.12px;font-size:11.35px;letter-spacing:0.061px;color:#333;font-weight:normal;">Fanny I Consentio</div>
<div class="t" id="t28" style="left:352.17px;top:290.07px;font-size:11.48px;letter-spacing:0.139px;color:#333;font-weight:normal;">#J7L85NKPO1</div>
<div class="t" id="t29" style="left:352.57px;top:307.12px;font-size:11.35px;letter-spacing:0.038px;color:#666;font-weight:normal;">Via Consentio</div>
<div class="t" id="t30" style="left:538.95px;top:290.06px;font-size:11.52px;letter-spacing:0.073px;color:#333;font-weight:normal;">Consentio</div>
<div class="t" id="t31" style="left:538.62px;top:307.15px;font-size:11.25px;letter-spacing:0.199px;color:#333;font-weight:normal;">Naiara</div>
<div class="t" id="t32" style="left:686.51px;top:298.05px;font-size:11.55px;letter-spacing:0.071px;color:#666;font-weight:normal;">Fri, 01 Sep 2023</div>
<div class="t" id="t33" style="left:905.87px;top:289.91px;font-size:11.94px;letter-spacing:0.044px;color:#333;font-weight:normal;">01 Sep 2023</div>
<div class="t" id="t34" style="left:906.00px;top:306.86px;font-size:12.10px;letter-spacing:0.149px;color:#666;font-weight:normal;">09:13</div>
<div class="t" id="t35" style="left:1065.43px;top:297.83px;font-size:12.18px;letter-spacing:3.906px;color:#444;font-weight:normal;">2</div>
<div class="t" id="t36" style="left:1142.30px;top:298.68px;font-size:12.60px;letter-spacing:0.234px;color:#1a1a1a;font-weight:bold;transform:scaleX(1.1044);transform-origin:0 50%;">6.00€</div>
<div class="t" id="t37" style="left:68.05px;top:360.07px;font-size:11.49px;letter-spacing:0.207px;color:#6b3a86;font-weight:normal;">Pending</div>
<div class="t" id="t38" style="left:211.51px;top:360.12px;font-size:11.35px;letter-spacing:0.061px;color:#333;font-weight:normal;">Fanny I Consentio</div>
<div class="t" id="t39" style="left:352.17px;top:352.06px;font-size:11.52px;letter-spacing:0.165px;color:#333;font-weight:normal;">#GO4RDZ15OP</div>
<div class="t" id="t40" style="left:352.57px;top:368.12px;font-size:11.35px;letter-spacing:0.038px;color:#666;font-weight:normal;">Via Consentio</div>
<div class="t" id="t41" style="left:538.95px;top:352.06px;font-size:11.52px;letter-spacing:0.073px;color:#333;font-weight:normal;">Consentio</div>
<div class="t" id="t42" style="left:538.62px;top:368.15px;font-size:11.25px;letter-spacing:0.199px;color:#333;font-weight:normal;">Naiara</div>
<div class="t" id="t43" style="left:686.51px;top:360.05px;font-size:11.55px;letter-spacing:0.071px;color:#666;font-weight:normal;">Fri, 01 Sep 2023</div>
<div class="t" id="t44" style="left:905.87px;top:351.91px;font-size:11.94px;letter-spacing:0.044px;color:#333;font-weight:normal;">01 Sep 2023</div>
<div class="t" id="t45" style="left:906.00px;top:367.86px;font-size:12.10px;letter-spacing:0.151px;color:#666;font-weight:normal;">09:07</div>
<div class="t" id="t46" style="left:1065.43px;top:359.83px;font-size:12.18px;letter-spacing:3.906px;color:#444;font-weight:normal;">2</div>
<div class="t" id="t47" style="left:1138.08px;top:359.68px;font-size:12.60px;letter-spacing:0.278px;color:#1a1a1a;font-weight:bold;transform:scaleX(1.1061);transform-origin:0 50%;">12.20€</div>
<div class="t" id="t48" style="left:68.05px;top:422.07px;font-size:11.49px;letter-spacing:0.207px;color:#6b3a86;font-weight:normal;">Pending</div>
<div class="t" id="t49" style="left:211.51px;top:422.12px;font-size:11.35px;letter-spacing:0.061px;color:#333;font-weight:normal;">Fanny I Consentio</div>
<div class="t" id="t50" style="left:352.17px;top:412.98px;font-size:11.75px;letter-spacing:0.075px;color:#333;font-weight:normal;">#E71R8KQB7W</div>
<div class="t" id="t51" style="left:352.57px;top:430.12px;font-size:11.35px;letter-spacing:0.038px;color:#666;font-weight:normal;">Via Consentio</div>
<div class="t" id="t52" style="left:538.95px;top:413.06px;font-size:11.52px;letter-spacing:0.073px;color:#333;font-weight:normal;">Consentio</div>
<div class="t" id="t53" style="left:538.62px;top:430.15px;font-size:11.25px;letter-spacing:0.199px;color:#333;font-weight:normal;">Naiara</div>
<div class="t" id="t54" style="left:686.51px;top:422.05px;font-size:11.55px;letter-spacing:0.071px;color:#666;font-weight:normal;">Fri, 01 Sep 2023</div>
<div class="t" id="t55" style="left:905.87px;top:412.91px;font-size:11.94px;letter-spacing:0.044px;color:#333;font-weight:normal;">01 Sep 2023</div>
<div class="t" id="t56" style="left:905.81px;top:429.86px;font-size:12.10px;letter-spacing:0.206px;color:#666;font-weight:normal;">09:06</div>
<div class="t" id="t57" style="left:1065.20px;top:421.83px;font-size:12.18px;letter-spacing:5.543px;color:#444;font-weight:normal;">3</div>
<div class="t" id="t58" style="left:1138.08px;top:421.68px;font-size:12.60px;letter-spacing:0.278px;color:#1a1a1a;font-weight:bold;transform:scaleX(1.1061);transform-origin:0 50%;">17.05€</div>
<svg style="position:absolute;left:415px;top:0" width="136" height="44" viewBox="415 0 136 44"><ellipse cx="483.6" cy="20.4" rx="59.0" ry="16.7" fill="none" stroke="#90e88c" stroke-width="3.3"/></svg>
</div></body></html>
